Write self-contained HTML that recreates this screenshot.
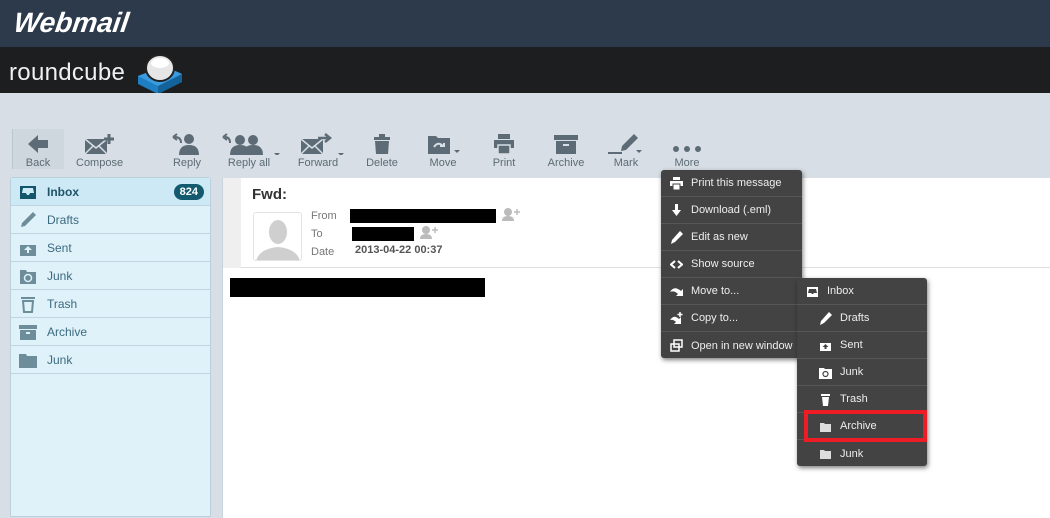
<!DOCTYPE html>
<html><head><meta charset="utf-8"><style>
*{margin:0;padding:0;box-sizing:border-box}
body{width:1050px;height:514px;overflow:hidden;font-family:"Liberation Sans",sans-serif;background:#d7dee5;position:relative}
.top{position:absolute;left:0;top:0;width:1050px;height:47px;background:#2c3a4b}
.wm{position:absolute;left:14px;top:7px;color:#fff;font:italic bold 28px "Liberation Sans",sans-serif;letter-spacing:0px;transform:skewX(-8deg)}
.rc{position:absolute;left:0;top:47px;width:1050px;height:46px;background:#1d1e1f}
.rct{position:absolute;left:9px;top:12px;color:#f0f0f0;font-size:24px;letter-spacing:0.3px}
.tb{position:absolute;top:93px;left:0;width:1050px;height:85px;background:#d7dee5}
.btn{position:absolute;top:133px;text-align:center;font-size:11px;color:#5c6a75}
.btn svg{display:block;margin:0 auto 2px}
.btn span{display:block}
.lp{position:absolute;left:10px;top:177px;width:201px;height:340px;background:#dff1f9;border:1px solid #bcd0dc;border-radius:3px 3px 0 0}
.fr{height:28px;border-bottom:1px solid #bfd5e0;display:flex;align-items:center;padding-left:7px;font-size:12px;color:#3b6a7f}
.fr svg{width:20px;height:20px;margin-right:9px}
.fr.sel{background:#cde9f5;font-weight:bold;color:#1e5468}
.badge{margin-left:auto;margin-right:6px;background:#135a6e;color:#fff;font-weight:bold;font-size:11px;border-radius:10px;padding:2px 6px}
.mp{position:absolute;left:222px;top:178px;width:830px;height:340px;background:#fff;border-left:1px solid #c9d3db}
.mh{position:absolute;left:0;top:0;width:830px;height:90px;background:#fff;border-bottom:1px solid #e0e0e0}
.strip{position:absolute;left:0;top:0;width:18px;height:90px;background:#efefef}
.menu{position:absolute;background:#434343;border-radius:3px;box-shadow:1px 2px 5px rgba(0,0,0,.5);color:#eee;font-size:11px}
.mi{height:27px;border-bottom:1px solid #575757;display:flex;align-items:center;padding-left:9px}
.mi:last-child{border-bottom:none}
.mi svg{width:13px;height:13px;margin-right:8px;fill:#fff}
</style></head><body>
<div class="top"><div class="wm">Webmail</div></div>
<div class="rc"><div class="rct">roundcube</div>
<svg style="position:absolute;left:134px;top:3px" width="52" height="46" viewBox="0 0 52 46"><path d="M4 26 L30 16 L48 24 L48 32 L24 44 L4 34Z" fill="#1f7fc4"/><path d="M4 26 L24 36 L48 24 L30 16Z" fill="#3a9bde"/><path d="M24 36 L24 44 L48 32 L48 24Z" fill="#14629a"/><ellipse cx="26" cy="18" rx="14" ry="13" fill="#e6e6e6" stroke="#222" stroke-width="2"/><ellipse cx="26" cy="13" rx="9" ry="5" fill="#fff"/></svg></div>
<div class="tb"></div>
<div style="position:absolute;left:12px;top:129px;width:52px;height:40px;background:#cfd7de;border-left:1px solid #bcc6ce"></div>
<div class="btn" style="left:20px;width:36px"><svg width="24" height="22" viewBox="0 0 24 22"><path d="M2 11 L12 2 L12 7 L22 7 L22 15 L12 15 L12 20Z" fill="#5d6b76"/></svg><span>Back</span></div>
<div class="btn" style="left:76px;width:46px"><svg width="34" height="22" viewBox="0 0 34 22"><rect x="3" y="6" width="22" height="15" fill="#5d6b76"/><path d="M3 6 L14 15 L25 6 M3 21 L11 13 M25 21 L17 13" stroke="#d7dee5" stroke-width="1.5" fill="none"/><path d="M27 1v10M22 6h10" stroke="#5d6b76" stroke-width="3"/></svg><span>Compose</span></div>
<div class="btn" style="left:170px;width:34px"><svg width="32" height="22" viewBox="0 0 32 22"><circle cx="18" cy="6" r="5" fill="#5d6b76"/><path d="M8 22 Q8 12 18 12 Q28 12 28 22Z" fill="#5d6b76"/><path d="M10 10 Q10 4 4 4 M2 4 L6 1 M2 4 L6 7" stroke="#5d6b76" stroke-width="2" fill="none"/></svg><span>Reply</span></div>
<div class="btn" style="left:220px;width:62px"><svg width="58" height="22" viewBox="0 0 58 22"><circle cx="18" cy="7" r="5" fill="#5d6b76"/><path d="M8 22 Q8 12 18 12 Q28 12 28 22Z" fill="#5d6b76"/><circle cx="31" cy="7" r="5" fill="#5d6b76"/><path d="M21 22 Q21 12 31 12 Q41 12 41 22Z" fill="#5d6b76"/><path d="M8 10 Q8 4 3 4 M1 4 L5 1 M1 4 L5 7" stroke="#5d6b76" stroke-width="2" fill="none"/><path d="M52 20h6l-3 3z" fill="#5d6b76"/></svg><span style="margin-left:-4px">Reply all</span></div>
<div class="btn" style="left:298px;width:50px"><svg width="50" height="22" viewBox="0 0 50 22"><rect x="3" y="6" width="22" height="15" fill="#5d6b76"/><path d="M3 6 L14 15 L25 6 M3 21 L11 13 M25 21 L17 13" stroke="#d7dee5" stroke-width="1.5" fill="none"/><path d="M20 5h10M27 1l5 4-5 4" stroke="#5d6b76" stroke-width="2.5" fill="none"/><path d="M40 20h6l-3 3z" fill="#5d6b76"/></svg><span style="margin-left:-10px">Forward</span></div>
<div class="btn" style="left:366px;width:32px"><svg width="22" height="22" viewBox="0 0 22 22"><rect x="3" y="4" width="16" height="3" fill="#5d6b76"/><rect x="8" y="1" width="6" height="3" fill="#5d6b76"/><path d="M4 8h14l-1 13H5Z" fill="#5d6b76"/></svg><span>Delete</span></div>
<div class="btn" style="left:426px;width:38px"><svg width="38" height="22" viewBox="0 0 38 22"><path d="M2 3h8l2 2h12v16H2Z" fill="#5d6b76"/><path d="M8 14 Q12 8 17 13 M14 13h4v-3" stroke="#d7dee5" stroke-width="2" fill="none"/><path d="M28 17h6l-3 3z" fill="#5d6b76"/></svg><span style="margin-left:-4px">Move</span></div>
<div class="btn" style="left:490px;width:28px"><svg width="24" height="22" viewBox="0 0 24 22"><rect x="6" y="1" width="12" height="5" fill="#5d6b76"/><rect x="2" y="7" width="20" height="8" fill="#5d6b76"/><path d="M6 12h12v9H6Z" fill="#5d6b76" stroke="#d7dee5" stroke-width="1.5"/></svg><span>Print</span></div>
<div class="btn" style="left:546px;width:40px"><svg width="26" height="22" viewBox="0 0 26 22"><rect x="1" y="2" width="24" height="5" fill="#5d6b76"/><rect x="3" y="8" width="20" height="13" fill="#5d6b76"/><rect x="10" y="11" width="6" height="2" fill="#d7dee5"/></svg><span>Archive</span></div>
<div class="btn" style="left:606px;width:40px"><svg width="40" height="22" viewBox="0 0 40 22"><path d="M28 1l4 4-12 12-5 1 1-5Z" fill="#5d6b76"/><path d="M2 20h14" stroke="#5d6b76" stroke-width="2"/><path d="M30 17h6l-3 3z" fill="#5d6b76"/></svg><span style="margin-left:0px">Mark</span></div>
<div class="btn" style="left:670px;width:34px"><svg width="34" height="22" viewBox="0 0 34 22"><circle cx="6" cy="16" r="3" fill="#5d6b76"/><circle cx="17" cy="16" r="3" fill="#5d6b76"/><circle cx="28" cy="16" r="3" fill="#5d6b76"/></svg><span>More</span></div>

<div class="lp">
<div class="fr sel"><svg viewBox="0 0 20 20"><path d="M2 4h16v13H2Z M5 6l-1 5h4l1 2h2l1-2h4l-1-5Z" fill="#13556a" fill-rule="evenodd"/></svg>Inbox<span class="badge">824</span></div>
<div class="fr"><svg viewBox="0 0 20 20"><path d="M15 2l3 3-11 11-4 1 1-4Z" fill="#6d8d9a"/></svg>Drafts</div>
<div class="fr"><svg viewBox="0 0 20 20"><path d="M2 7h16v11H2Z" fill="#6d8d9a"/><path d="M10 8l-4 4h3v3h2v-3h3Z" fill="#dff1f9"/></svg>Sent</div>
<div class="fr"><svg viewBox="0 0 20 20"><path d="M2 4h6l1 2h9v12H2Z" fill="#6d8d9a"/><circle cx="10" cy="12" r="3.5" fill="none" stroke="#dff1f9" stroke-width="1.5"/></svg>Junk</div>
<div class="fr"><svg viewBox="0 0 20 20"><rect x="3" y="3" width="14" height="2" fill="#6d8d9a"/><path d="M5 7h10l-1 11H6Z" fill="none" stroke="#6d8d9a" stroke-width="2"/></svg>Trash</div>
<div class="fr"><svg viewBox="0 0 20 20"><rect x="1" y="3" width="18" height="4" fill="#6d8d9a"/><rect x="2" y="8" width="16" height="10" fill="#6d8d9a"/><rect x="8" y="10" width="4" height="2" fill="#dff1f9"/></svg>Archive</div>
<div class="fr"><svg viewBox="0 0 20 20"><path d="M1 4h7l1 2h10v12H1Z" fill="#6d8d9a"/></svg>Junk</div>
</div>

<div class="mp">
<div class="mh"><div class="strip"></div>
<div style="position:absolute;left:29px;top:8px;font-weight:bold;font-size:15px;color:#333">Fwd:</div>
<div style="position:absolute;left:30px;top:34px;width:49px;height:49px;border:1px solid #e3e3e3;border-radius:3px;background:#fff;overflow:hidden"><svg width="49" height="49" viewBox="0 0 49 49"><ellipse cx="24" cy="19" rx="9" ry="12" fill="#cfcfcf"/><path d="M2 49 Q4 36 24 34 Q44 36 46 49Z" fill="#cfcfcf"/></svg></div>
<div style="position:absolute;left:88px;top:29px;font-size:11px;color:#777;line-height:18px">From<br>To<br>Date</div>
<div style="position:absolute;left:127px;top:31px;width:146px;height:14px;background:#000"></div>
<div style="position:absolute;left:129px;top:49px;width:62px;height:14px;background:#000"></div>
<div style="position:absolute;left:132px;top:66px;font-size:11px;font-weight:bold;color:#555">2013-04-22 00:37</div>
<svg style="position:absolute;left:278px;top:29px" width="20" height="14"><circle cx="7" cy="5" r="4" fill="#bbb"/><path d="M1 14Q1 9 7 9Q13 9 13 14Z" fill="#bbb"/><path d="M16 2v6M13 5h6" stroke="#bbb" stroke-width="1.5"/></svg>
<svg style="position:absolute;left:196px;top:47px" width="20" height="14"><circle cx="7" cy="5" r="4" fill="#bbb"/><path d="M1 14Q1 9 7 9Q13 9 13 14Z" fill="#bbb"/><path d="M16 2v6M13 5h6" stroke="#bbb" stroke-width="1.5"/></svg>
</div>
<div style="position:absolute;left:7px;top:100px;width:255px;height:19px;background:#000"></div>
</div>

<div class="menu" style="left:661px;top:170px;width:141px;height:188px">
<div class="mi"><svg viewBox="0 0 13 13"><rect x="3" y="0" width="7" height="3"/><rect x="0" y="4" width="13" height="5"/><rect x="3" y="7" width="7" height="6" stroke="#434343"/></svg>Print this message</div>
<div class="mi"><svg viewBox="0 0 13 13"><path d="M5 0h3v6h3l-4.5 6L2 6h3Z"/></svg>Download (.eml)</div>
<div class="mi"><svg viewBox="0 0 13 13"><path d="M10 0l3 3-8 8-4 2 1-4Z"/></svg>Edit as new</div>
<div class="mi"><svg viewBox="0 0 13 13"><path d="M5 3L1 6.5 5 10M8 3l4 3.5L8 10" stroke="#fff" stroke-width="2" fill="none"/></svg>Show source</div>
<div class="mi"><svg viewBox="0 0 13 13"><path d="M0 7Q4 0 11 6l2-2v7H6l2-2Q4 5 0 7Z"/></svg>Move to...</div>
<div class="mi"><svg viewBox="0 0 13 13"><path d="M0 8Q4 2 9 7l2-2v7H4l2-2Q3 7 0 8Z"/><path d="M10 0v5M7.5 2.5h5" stroke="#fff" stroke-width="1.5"/></svg>Copy to...</div>
<div class="mi"><svg viewBox="0 0 13 13"><path d="M4 1h8v7H4Z M1 5h8v7H1Z" fill="none" stroke="#fff" stroke-width="1.5"/></svg>Open in new window</div>
</div>

<div class="menu" style="left:797px;top:278px;width:130px;height:188px">
<div class="mi"><svg viewBox="0 0 13 13"><path d="M1 2h11v10H1Z M3 4l-1 4h3l1 1h1l1-1h3l-1-4Z" fill-rule="evenodd"/></svg>Inbox</div>
<div class="mi" style="padding-left:22px"><svg viewBox="0 0 13 13"><path d="M10 0l3 3-8 8-4 2 1-4Z"/></svg>Drafts</div>
<div class="mi" style="padding-left:22px"><svg viewBox="0 0 13 13"><path d="M1 4h11v8H1Z"/><path d="M6.5 5l-3 3h2v2h2V8h2Z" fill="#434343"/></svg>Sent</div>
<div class="mi" style="padding-left:22px"><svg viewBox="0 0 13 13"><path d="M0 2h5l1 1h7v10H0Z"/><circle cx="6.5" cy="8" r="2.5" fill="none" stroke="#434343" stroke-width="1.2"/></svg>Junk</div>
<div class="mi" style="padding-left:22px"><svg viewBox="0 0 13 13"><rect x="2" y="1" width="9" height="2"/><path d="M3 4h7l-1 9H4Z"/></svg>Trash</div>
<div class="mi" style="padding-left:22px"><svg viewBox="0 0 13 13"><path d="M1 3h4l1 1h6v8H1Z" fill="#ddd"/></svg>Archive</div>
<div class="mi" style="padding-left:22px"><svg viewBox="0 0 13 13"><path d="M1 3h4l1 1h6v8H1Z" fill="#ddd"/></svg>Junk</div>
</div>
<div style="position:absolute;left:804px;top:410px;width:123px;height:32px;border:4px solid #ee1c24"></div>
</body></html>
